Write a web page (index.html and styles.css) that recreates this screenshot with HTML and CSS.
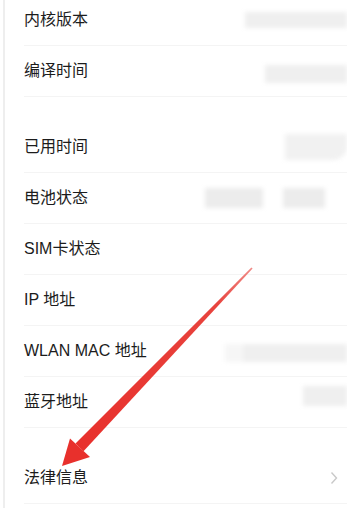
FILE: index.html
```html
<!DOCTYPE html>
<html lang="zh-CN">
<head>
	<meta charset="UTF-8">
	<title>关于手机</title>
	<link rel="stylesheet" href="styles.css">
</head>
<body>
	<div class="page">
		<ul class="group first">
			<li class="row"><span class="label">内核版本</span><span class="mask m-kernel"></span></li>
			<li class="row"><span class="label">编译时间</span><span class="mask m-build"></span></li>
		</ul>
		<ul class="group">
			<li class="row"><span class="label">已用时间</span><span class="mask m-uptime"></span></li>
			<li class="row"><span class="label">电池状态</span><span class="mask m-battery"></span><span class="mask m-battery2"></span></li>
			<li class="row"><span class="label">SIM卡状态</span></li>
			<li class="row"><span class="label">IP 地址</span></li>
			<li class="row"><span class="label">WLAN MAC 地址</span><span class="mask m-mac"></span></li>
			<li class="row"><span class="label">蓝牙地址</span><span class="mask m-bt"></span></li>
		</ul>
		<ul class="group">
			<li class="row link">
				<span class="label">法律信息</span>
				<svg class="chevron" width="8" height="14" viewBox="0 0 8 14"><polyline points="1.5,1.5 6.5,7 1.5,12.5" fill="none" stroke="#c9c9c9" stroke-width="1.4"/></svg>
			</li>
		</ul>
	</div>

	<!-- 标注箭头 -->
	<svg class="arrow" width="347" height="513" viewBox="0 0 347 513">
		<defs>
			<linearGradient id="shaft" x1="252" y1="268" x2="80" y2="448" gradientUnits="userSpaceOnUse">
				<stop offset="0" stop-color="#f08a86"/>
				<stop offset="0.2" stop-color="#e8443e"/>
				<stop offset="1" stop-color="#e8302c"/>
			</linearGradient>
		</defs>
		<polygon points="252.6,268.4 251.4,267.6 75.5,443.5 83.5,451.2" fill="url(#shaft)"/>
		<polygon points="62,466 70,438.5 90,457" fill="#e8302c"/>
	</svg>
</body>
</html>
```

FILE: styles.css
```css
html,
body {
	margin: 0;
	padding: 0;
	background: #fff;
}

body {
	width: 347px;
	height: 513px;
	overflow: hidden;
	position: relative;
	font-family: "Liberation Sans", "Noto Sans CJK SC", sans-serif;
	color: #1c1c1c;
}

.page {
	margin-left: 3px;
	border-left: 2px solid #eeeeee;
	min-height: 513px;
}

ul,
li {
	margin: 0;
	padding: 0;
	list-style: none;
}

.group {
	margin-top: 25px;
}
.group.first {
	margin-top: -5px;
}

.row {
	display: flex;
	align-items: center;
	height: 50px;
	margin-left: 19px;
	border-bottom: 1px solid #f4f4f4;
	font-size: 16px;
	line-height: 1;
}

.label {
	flex: 1;
	white-space: nowrap;
}

/* 打码的数值 */
.mask {
	display: block;
	background: #efefef;
	filter: blur(2px);
}
.m-kernel {
	width: 102px;
	height: 16px;
}
.m-build {
	width: 82px;
	height: 18px;
	margin-top: 6px;
}
.m-uptime {
	width: 62px;
	height: 26px;
	border-radius: 0 0 14px 0;
	background: #f1f1f1;
}
.m-battery {
	width: 58px;
	height: 20px;
	margin-right: 20px;
	background: #ececec;
}
.m-battery2 {
	width: 42px;
	height: 20px;
	margin-right: 22px;
	background: #ececec;
}
.m-mac {
	width: 104px;
	height: 18px;
	margin-top: 3px;
	box-shadow: -18px 0 0 #f6f6f6;
}
.m-bt {
	width: 44px;
	height: 20px;
	margin-top: -12px;
}

.link .chevron {
	margin-right: 9px;
}

.arrow {
	position: absolute;
	left: 0;
	top: 0;
	pointer-events: none;
}
```
